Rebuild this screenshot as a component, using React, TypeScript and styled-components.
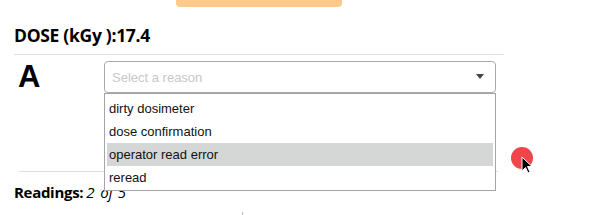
import React from "react";
import styled, { createGlobalStyle } from "styled-components";

const Global = createGlobalStyle`
  html, body { margin: 0; padding: 0; background: #fff; }
  body { width: 613px; height: 215px; overflow: hidden; font-family: "Liberation Sans", Arial, sans-serif; }
`;

const Page = styled.div`
  position: relative;
  width: 490px;
  margin-left: 14px;
  display: flex;
  flex-direction: column;
`;

const TopButton = styled.div`
  align-self: center;
  width: 166px;
  height: 7px;
  background: #ffc98b;
  border-radius: 0 0 4px 4px;
`;

const Title = styled.h2`
  margin: 17px 0 8px;
  font-family: "Open Sans", "Noto Sans", sans-serif;
  font-weight: 700;
  font-size: 17.5px;
  line-height: 22px;
  color: #000;
  letter-spacing: -0.3px;
`;

const Divider = styled.hr<{ $inset?: number }>`
  margin: 0;
  margin-left: ${(p) => p.$inset ?? 0}px;
  border: none;
  border-top: 1px solid #dedede;
  width: ${(p) => 490 - (p.$inset ?? 0) - (p.$inset ? 6 : 0)}px;
`;

const Row = styled.div<{ $height: number }>`
  display: flex;
  align-items: flex-start;
  padding: 6px 0 0 4px;
  height: ${(p) => p.$height}px;
`;

const Letter = styled.div`
  width: 86px;
  font-family: "Liberation Sans", Arial, sans-serif;
  font-weight: 700;
  font-size: 31px;
  line-height: 30px;
  padding-top: 1px;
  color: #000;
`;

const SelectWrap = styled.div`
  position: relative;
  width: 392px;
`;

const SelectBox = styled.div`
  box-sizing: border-box;
  height: 32px;
  border: 1px solid #aaa;
  border-radius: 4px;
  display: flex;
  align-items: center;
  padding: 0 7px 0 7px;
  justify-content: space-between;
`;

const Placeholder = styled.span`
  font-size: 13px;
  color: #c8c8c8;
  padding-top: 1px;
`;

const Caret = styled.span`
  width: 0;
  height: 0;
  border-left: 4px solid transparent;
  border-right: 4px solid transparent;
  border-top: 5px solid #444;
  margin-right: 4px;
  margin-top: -2px;
`;

const Menu = styled.ul`
  position: absolute;
  top: 32px;
  left: 0;
  right: 0;
  margin: 0;
  box-sizing: border-box;
  list-style: none;
  background: #fff;
  border: 1px solid #a5a5a5;
  padding: 3px 2px 1px;
  z-index: 2;
`;

const Item = styled.li<{ $active?: boolean }>`
  height: 23px;
  line-height: 23px;
  padding-left: 2px;
  font-size: 13px;
  color: #111;
  background: ${(p) => (p.$active ? "#d5d7d6" : "transparent")};
`;

const Readings = styled.div`
  margin-top: 10px;
  font-family: "Open Sans", "Noto Sans", sans-serif;
  font-size: 15px;
  line-height: 20px;
  color: #000;
  letter-spacing: -0.3px;
`;

const Strong = styled.b`
  font-weight: 700;
  margin-right: 3px;
`;

const Em = styled.i<{ $gap: number }>`
  font-style: italic;
  margin-right: ${(p) => p.$gap}px;
`;

const Tick = styled.div`
  position: absolute;
  left: 228px;
  top: 212px;
  width: 1px;
  height: 3px;
  background: #bbb;
`;

const Pointer = styled.div`
  position: absolute;
  left: 497px;
  top: 147px;
  width: 22px;
  height: 22px;
  border-radius: 50%;
  background: #f0454a;
  z-index: 3;
`;

const Cursor = styled.svg`
  position: absolute;
  left: 507px;
  top: 156px;
  z-index: 4;
`;

const reasons = ["dirty dosimeter", "dose confirmation", "operator read error", "reread"];

export default function App() {
  return (
    <>
      <Global />
      <Page>
        <TopButton />
        <Title>DOSE (kGy ):17.4</Title>
        <Divider />
        <Row $height={110}>
          <Letter>A</Letter>
          <SelectWrap>
            <SelectBox>
              <Placeholder>Select a reason</Placeholder>
              <Caret />
            </SelectBox>
            <Menu>
              {reasons.map((r) => (
                <Item key={r} $active={r === "operator read error"}>
                  {r}
                </Item>
              ))}
            </Menu>
          </SelectWrap>
        </Row>
        <Divider $inset={5} />
        <Readings>
          <Strong>Readings:</Strong>
          <Em $gap={6}>2</Em>
          <Em $gap={5}>of</Em>
          <Em $gap={0}>5</Em>
        </Readings>
        <Tick />
        <Pointer />
        <Cursor width="12" height="19" viewBox="0 0 12 19">
          <path d="M1 1 L1 15 L4.5 11.5 L7 17 L9 16 L6.5 10.5 L11 10.5 Z" fill="#000" stroke="#fff" strokeWidth="1" />
        </Cursor>
      </Page>
    </>
  );
}
